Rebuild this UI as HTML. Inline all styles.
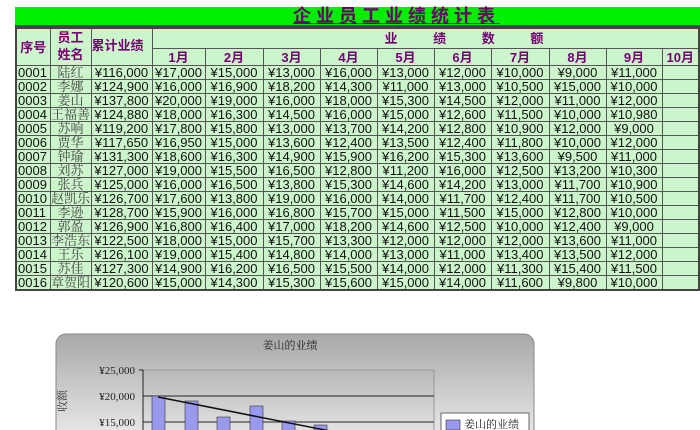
<!DOCTYPE html>
<html><head><meta charset="utf-8"><style>
html,body{margin:0;width:700px;height:430px;overflow:hidden}
body{background:#fff;position:relative;font-family:"Liberation Sans","Noto Sans CJK SC",sans-serif}
.title{position:absolute;left:15px;top:7px;width:685px;height:20px;background:#00ee00;border-bottom:2px solid #444;box-sizing:border-box}
.title span{position:absolute;left:278px;top:-1px;font-size:18px;font-weight:bold;color:#660066;letter-spacing:5px;line-height:20px;text-decoration:underline}
table{position:absolute;left:15px;top:27px;border-collapse:collapse;table-layout:fixed;background:#ccf5cc;border:2px solid #444}
td{border:1px solid #555;padding:0;font-size:13px;line-height:13px;height:13px;text-align:center;white-space:nowrap;overflow:hidden;color:#111}
td.s{font-family:"Liberation Serif","Noto Serif CJK SC",serif;color:#444}
td.l{text-align:left;padding-left:1px}
.h{color:#770077;font-weight:bold;font-size:13px}
</style></head><body>
<div class="title"><span>企业员工业绩统计表</span></div>
<table>
<colgroup><col style="width:34px"><col style="width:41px"><col style="width:61px"><col style="width:53px"><col style="width:58px"><col style="width:57px"><col style="width:57px"><col style="width:57px"><col style="width:57px"><col style="width:58px"><col style="width:57px"><col style="width:56px"><col style="width:37px"></colgroup>
<tr><td rowspan="2" class="h" style="height:19px">序号</td><td rowspan="2" class="h" style="line-height:17px;vertical-align:top">员工<br>姓名</td><td rowspan="2" class="h" style="text-align:left;vertical-align:top;padding-top:10px">累计业绩</td><td colspan="10" class="h" style="height:19px;border-bottom:1px solid #555;word-spacing:32px;text-align:left;padding-left:232px">业 绩 数 额</td></tr>
<tr><td class="h" style="height:16px">1月</td><td class="h">2月</td><td class="h">3月</td><td class="h">4月</td><td class="h">5月</td><td class="h">6月</td><td class="h">7月</td><td class="h">8月</td><td class="h">9月</td><td class="h">10月</td></tr>
<tr><td class="l">0001</td><td class="s">陆红</td><td>¥116,000</td><td>¥17,000</td><td>¥15,000</td><td>¥13,000</td><td>¥16,000</td><td>¥13,000</td><td>¥12,000</td><td>¥10,000</td><td>¥9,000</td><td>¥11,000</td><td></td></tr>
<tr><td class="l">0002</td><td class="s">李娜</td><td>¥124,900</td><td>¥16,000</td><td>¥16,900</td><td>¥18,200</td><td>¥14,300</td><td>¥11,000</td><td>¥13,000</td><td>¥10,500</td><td>¥15,000</td><td>¥10,000</td><td></td></tr>
<tr><td class="l">0003</td><td class="s">姜山</td><td>¥137,800</td><td>¥20,000</td><td>¥19,000</td><td>¥16,000</td><td>¥18,000</td><td>¥15,300</td><td>¥14,500</td><td>¥12,000</td><td>¥11,000</td><td>¥12,000</td><td></td></tr>
<tr><td class="l">0004</td><td class="s">王福善</td><td>¥124,880</td><td>¥18,000</td><td>¥16,300</td><td>¥14,500</td><td>¥16,000</td><td>¥15,000</td><td>¥12,600</td><td>¥11,500</td><td>¥10,000</td><td>¥10,980</td><td></td></tr>
<tr><td class="l">0005</td><td class="s">苏响</td><td>¥119,200</td><td>¥17,800</td><td>¥15,800</td><td>¥13,000</td><td>¥13,700</td><td>¥14,200</td><td>¥12,800</td><td>¥10,900</td><td>¥12,000</td><td>¥9,000</td><td></td></tr>
<tr><td class="l">0006</td><td class="s">贾华</td><td>¥117,650</td><td>¥16,950</td><td>¥15,000</td><td>¥13,600</td><td>¥12,400</td><td>¥13,500</td><td>¥12,400</td><td>¥11,800</td><td>¥10,000</td><td>¥12,000</td><td></td></tr>
<tr><td class="l">0007</td><td class="s">钟瑜</td><td>¥131,300</td><td>¥18,600</td><td>¥16,300</td><td>¥14,900</td><td>¥15,900</td><td>¥16,200</td><td>¥15,300</td><td>¥13,600</td><td>¥9,500</td><td>¥11,000</td><td></td></tr>
<tr><td class="l">0008</td><td class="s">刘苏</td><td>¥127,000</td><td>¥19,000</td><td>¥15,500</td><td>¥16,500</td><td>¥12,800</td><td>¥11,200</td><td>¥16,000</td><td>¥12,500</td><td>¥13,200</td><td>¥10,300</td><td></td></tr>
<tr><td class="l">0009</td><td class="s">张兵</td><td>¥125,000</td><td>¥16,000</td><td>¥16,500</td><td>¥13,800</td><td>¥15,300</td><td>¥14,600</td><td>¥14,200</td><td>¥13,000</td><td>¥11,700</td><td>¥10,900</td><td></td></tr>
<tr><td class="l">0010</td><td class="s">赵凯乐</td><td>¥126,700</td><td>¥17,600</td><td>¥13,800</td><td>¥19,000</td><td>¥16,000</td><td>¥14,000</td><td>¥11,700</td><td>¥12,400</td><td>¥11,700</td><td>¥10,500</td><td></td></tr>
<tr><td class="l">0011</td><td class="s">李逊</td><td>¥128,700</td><td>¥15,900</td><td>¥16,000</td><td>¥16,800</td><td>¥15,700</td><td>¥15,000</td><td>¥11,500</td><td>¥15,000</td><td>¥12,800</td><td>¥10,000</td><td></td></tr>
<tr><td class="l">0012</td><td class="s">郭盈</td><td>¥126,900</td><td>¥16,800</td><td>¥16,400</td><td>¥17,000</td><td>¥18,200</td><td>¥14,600</td><td>¥12,500</td><td>¥10,000</td><td>¥12,400</td><td>¥9,000</td><td></td></tr>
<tr><td class="l">0013</td><td class="s">李浩东</td><td>¥122,500</td><td>¥18,000</td><td>¥15,000</td><td>¥15,700</td><td>¥13,300</td><td>¥12,000</td><td>¥12,000</td><td>¥12,000</td><td>¥13,600</td><td>¥11,000</td><td></td></tr>
<tr><td class="l">0014</td><td class="s">王乐</td><td>¥126,100</td><td>¥19,000</td><td>¥15,400</td><td>¥14,800</td><td>¥14,000</td><td>¥13,000</td><td>¥11,000</td><td>¥13,400</td><td>¥13,500</td><td>¥12,000</td><td></td></tr>
<tr><td class="l">0015</td><td class="s">苏佳</td><td>¥127,300</td><td>¥14,900</td><td>¥16,200</td><td>¥16,500</td><td>¥15,500</td><td>¥14,000</td><td>¥12,000</td><td>¥11,300</td><td>¥15,400</td><td>¥11,500</td><td></td></tr>
<tr><td class="l">0016</td><td class="s">章贺阳</td><td>¥120,600</td><td>¥15,000</td><td>¥14,300</td><td>¥15,300</td><td>¥15,600</td><td>¥15,000</td><td>¥14,000</td><td>¥11,600</td><td>¥9,800</td><td>¥10,000</td><td></td></tr>
</table>
<svg style="position:absolute;left:0;top:0" width="700" height="430" font-family="Liberation Serif,Noto Serif CJK SC,serif">
<defs><linearGradient id="g" x1="0" y1="0" x2="0" y2="1"><stop offset="0" stop-color="#a8a8a8"/><stop offset="1" stop-color="#f4f4f4"/></linearGradient>
<linearGradient id="p" x1="0" y1="0" x2="0" y2="1"><stop offset="0" stop-color="#b8b8b8"/><stop offset="1" stop-color="#e8e8e8"/></linearGradient></defs>
<rect x="56" y="334" width="478" height="120" rx="10" fill="url(#g)" stroke="#888"/>
<text x="290" y="349" font-size="11" text-anchor="middle" fill="#222">姜山的业绩</text>
<rect x="143" y="370" width="291" height="70" fill="url(#p)" stroke="#999"/>
<g stroke="#222" stroke-width="1"><line x1="143" y1="396" x2="434" y2="396"/><line x1="143" y1="422" x2="434" y2="422"/><line x1="143" y1="370" x2="143" y2="430"/><line x1="139" y1="370" x2="143" y2="370"/></g>
<g font-size="11" fill="#222" text-anchor="end"><text x="135" y="374">¥25,000</text><text x="135" y="400">¥20,000</text><text x="135" y="426">¥15,000</text></g>
<text x="66" y="412" font-size="11" fill="#333" transform="rotate(-90 66 412)">收额</text>
<g fill="#9999ee" stroke="#333" stroke-width="0.6"><rect x="152" y="396" width="13" height="40"/><rect x="185" y="401" width="13" height="40"/><rect x="217" y="417" width="13" height="30"/><rect x="250" y="406" width="13" height="30"/><rect x="282" y="421" width="13" height="30"/><rect x="314" y="425" width="13" height="30"/></g>
<line x1="158" y1="397" x2="335" y2="432" stroke="#111" stroke-width="1.5"/>
<rect x="441" y="413" width="88" height="20" fill="#fff" stroke="#666"/>
<rect x="446" y="420" width="14" height="10" fill="#9999ee" stroke="#333" stroke-width="0.6"/>
<text x="464" y="428" font-size="11" fill="#222">姜山的业绩</text>
</svg>
</body></html>
